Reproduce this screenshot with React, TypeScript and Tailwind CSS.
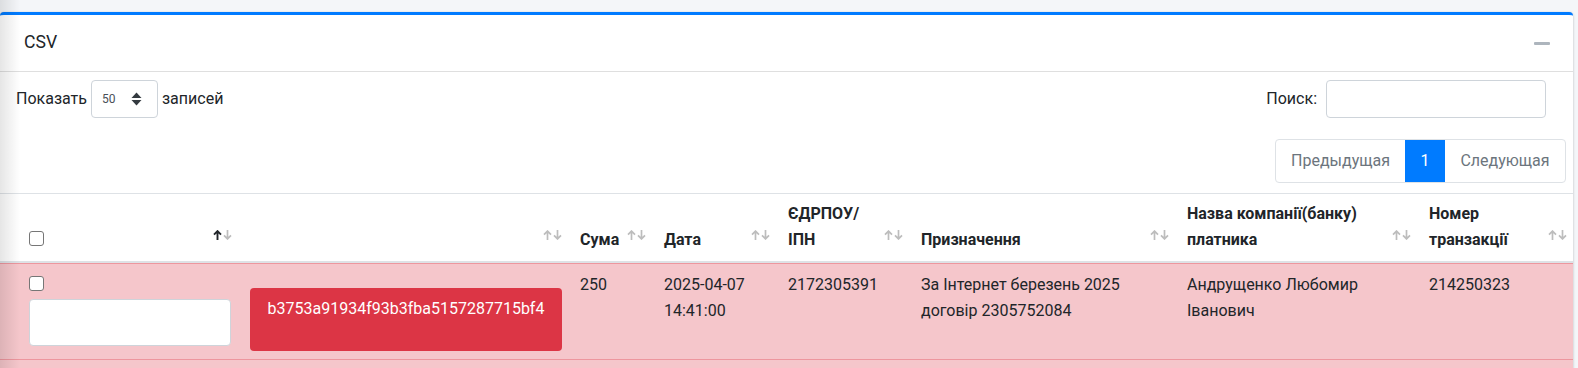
import React from 'react';

// DataTables-style sort indicator: ↑ and ↓ side by side
const SortArrows: React.FC<{ active?: boolean }> = ({ active }) => (
  <span className="pointer-events-none absolute right-[6px] bottom-[21px] flex gap-[1px]">
    <svg width="9" height="10" viewBox="0 0 9 10" fill="none" stroke={active ? '#212529' : '#bdbdbd'} strokeWidth={active ? 1.9 : 1.7}>
      <path d="M4.5 10V1.2M1 4.6l3.5-3.5 3.5 3.5" />
    </svg>
    <svg width="9" height="10" viewBox="0 0 9 10" fill="none" stroke="#bdbdbd" strokeWidth="1.7">
      <path d="M4.5 0v8.8M1 5.4l3.5 3.5 3.5-3.5" />
    </svg>
  </span>
);

const Checkbox: React.FC = () => (
  <input
    type="checkbox"
    className="block h-[15px] w-[15px] appearance-none rounded-[3px] border-[1.5px] border-[#767676] bg-white"
  />
);

const rows = [
  {
    hash: 'b3753a91934f93b3fba5157287715bf4',
    sum: '250',
    date: ['2025-04-07', '14:41:00'],
    code: '2172305391',
    purpose: 'За Інтернет березень 2025 договір 2305752084',
    payer: 'Андрущенко Любомир Іванович',
    tx: '214250323',
  },
];

const thBase =
  'relative border-t border-b-2 border-[#dee2e6] pt-[7px] pb-[7px] pl-3 pr-[30px] text-left align-bottom font-bold leading-[26.4px]';
const tdBase = 'border-t border-b border-[#ed969e] px-3 pt-[8px] pb-[8px] align-top leading-[26.4px]';

const App: React.FC = () => {
  return (
    <div className="relative min-h-screen overflow-hidden bg-[#f4f6f9] pt-3 font-[Roboto,sans-serif] text-[16px] text-[#212529]">
      <div className="w-[1573px] rounded-[4px] border-t-[3px] border-[#007bff] bg-white shadow-[0_0_1px_rgba(0,0,0,0.125),0_1px_3px_rgba(0,0,0,0.2)]">
        {/* Card header */}
        <div className="flex h-[57px] items-center justify-between border-b border-[#dfdfdf] pl-6 pr-[23px]">
          <h3 className="text-[17.6px] leading-none">CSV</h3>
          <span className="block h-[3px] w-[16px] rounded-[1px] bg-[#adb5bd]"></span>
        </div>

        {/* Length + search */}
        <div className="mt-[8px] flex h-[38px] items-center justify-between pl-4 pr-[27px]">
          <div className="flex items-center">
            <span>Показать</span>
            <div className="ml-[4px] flex h-[38px] w-[67px] items-center rounded-[4px] border border-[#ced4da] pl-[10px] pr-[15px]">
              <span className="text-[12px] text-[#495057]">50</span>
              <svg className="ml-auto" width="11" height="14" viewBox="0 0 11 14" fill="#343a40">
                <path d="M5.5 0.5L10.5 6H0.5z" />
                <path d="M5.5 13.5L10.5 8H0.5z" />
              </svg>
            </div>
            <span className="ml-[4px]">записей</span>
          </div>
          <div className="flex items-center">
            <span>Поиск:</span>
            <input className="ml-[9px] h-[38px] w-[220px] rounded-[4px] border border-[#ced4da] bg-white outline-none" />
          </div>
        </div>

        {/* Pagination */}
        <div className="mt-[21px] flex justify-end pr-[7px]">
          <div className="flex h-[44px] overflow-hidden rounded-[4px] border border-[#dee2e6] text-[#6c757d]">
            <span className="flex w-[129px] items-center justify-center">Предыдущая</span>
            <span className="-my-px flex w-[40px] items-center justify-center bg-[#007bff] text-white">1</span>
            <span className="flex w-[120px] items-center justify-center">Следующая</span>
          </div>
        </div>

        {/* Table */}
        <table className="mt-[10px] w-[1573px] table-fixed border-separate border-spacing-0">
          <thead>
            <tr>
              <th className={`${thBase} w-[238px] pl-[29px]`}>
                <div className="mb-[3px] flex h-[24px] items-center">
                  <Checkbox />
                </div>
                <SortArrows active />
              </th>
              <th className={`${thBase} w-[330px]`}>
                <SortArrows />
              </th>
              <th className={`${thBase} w-[84px]`}>
                Сума
                <SortArrows />
              </th>
              <th className={`${thBase} w-[124px]`}>
                Дата
                <SortArrows />
              </th>
              <th className={`${thBase} w-[133px]`}>
                ЄДРПОУ/
                <br />
                ІПН
                <SortArrows />
              </th>
              <th className={`${thBase} w-[266px]`}>
                Призначення
                <SortArrows />
              </th>
              <th className={`${thBase} w-[242px]`}>
                Назва компанії(банку)
                <br />
                платника
                <SortArrows />
              </th>
              <th className={`${thBase} w-[156px]`}>
                Номер
                <br />
                транзакції
                <SortArrows />
              </th>
            </tr>
          </thead>
          <tbody>
            {rows.map((row) => (
              <tr key={row.tx} className="bg-[#f5c6cb]">
                <td className={`${tdBase} pl-[29px]`}>
                  <div className="flex h-[24px] items-center">
                    <Checkbox />
                  </div>
                  <input className="mt-[3px] block h-[47px] w-[202px] rounded-[4px] border border-[#ced4da] bg-white outline-none" />
                </td>
                <td className={tdBase}>
                  <div className="mt-[16px] h-[63px] w-[312px] rounded-[4px] bg-[#dc3545] pt-[8px] text-center text-white">
                    {row.hash}
                  </div>
                </td>
                <td className={tdBase}>{row.sum}</td>
                <td className={tdBase}>
                  {row.date[0]}
                  <br />
                  {row.date[1]}
                </td>
                <td className={tdBase}>{row.code}</td>
                <td className={tdBase}>{row.purpose}</td>
                <td className={tdBase}>{row.payer}</td>
                <td className={tdBase}>{row.tx}</td>
              </tr>
            ))}
            <tr className="bg-[#f5c6cb]">
              <td colSpan={8} className="h-[24px]"></td>
            </tr>
          </tbody>
        </table>
      </div>

      {/* soft shadow on the left edge */}
      <div className="pointer-events-none absolute inset-y-0 left-0 w-[20px] bg-gradient-to-r from-black/10 to-transparent"></div>
    </div>
  );
};

export default App;
